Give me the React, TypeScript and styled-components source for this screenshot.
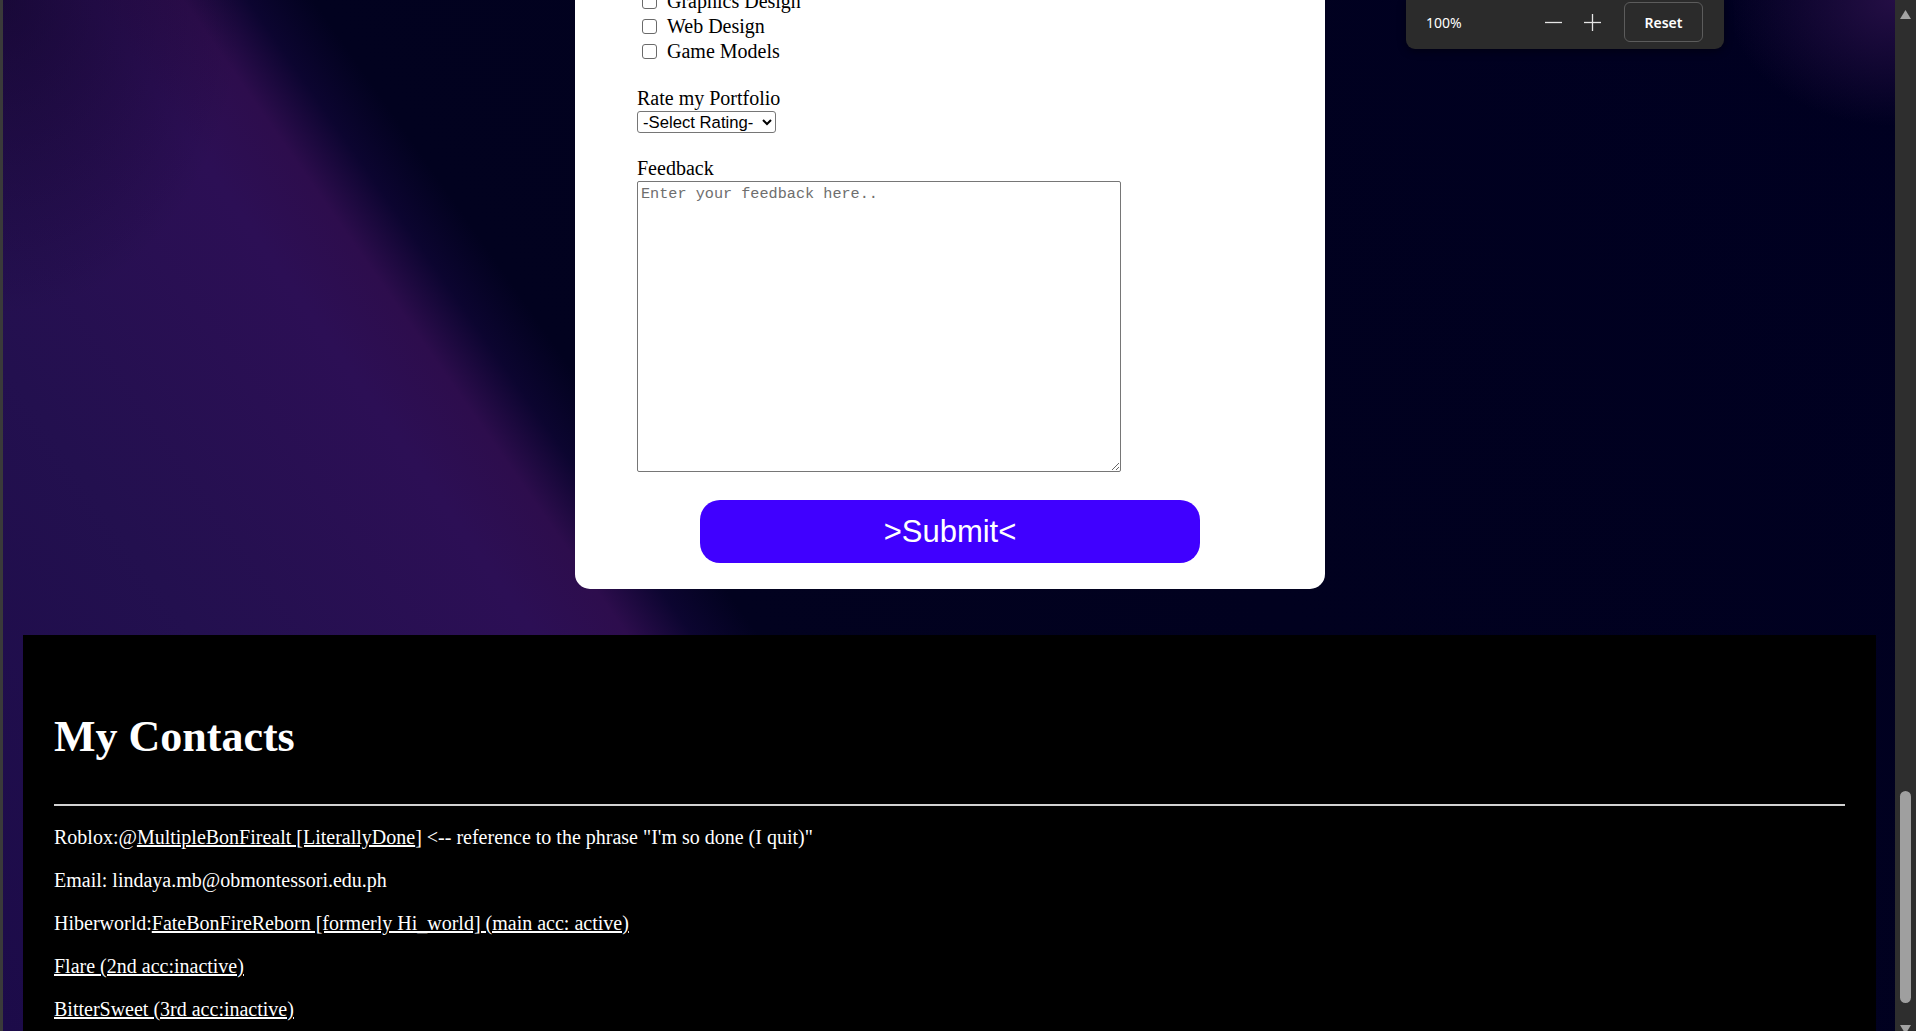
import React from "react";
import styled, { createGlobalStyle } from "styled-components";

const Global = createGlobalStyle`
  html, body { margin: 0; padding: 0; height: 100%; overflow: hidden; background: #00001f; }
  body { font-family: "Liberation Serif", "Times New Roman", serif; font-size: 20px; color: #000; }
  #root { height: 100%; }
  *, *::before, *::after { box-sizing: border-box; }
`;

const Window = styled.div`
  position: relative;
  display: flex;
  height: 100vh;
  overflow: hidden;
`;

const LeftEdge = styled.div`
  flex: none;
  width: 3px;
  background: #3a3a3a;
`;

const Page = styled.main`
  flex: 1;
  min-width: 0;
  display: flex;
  flex-direction: column;
  overflow: hidden;
  background:
    radial-gradient(ellipse 240px 180px at 100% 0%, rgba(72, 28, 104, 0.5), rgba(72, 28, 104, 0) 70%),
    radial-gradient(ellipse 320px 420px at 0% 0%, rgba(8, 2, 30, 0.5), rgba(8, 2, 30, 0) 75%),
    linear-gradient(55deg, #1c0b49 0%, #23104f 18%, #2c0f55 31%, #2d0d4d 34.5%, #0c0530 37%, #02021f 39.5%, #01011f 60%, #000021 100%);
`;

const Card = styled.form`
  flex: none;
  width: 750px;
  margin: -40px 0 0 calc(50% - 374px);
  padding: 29px 62px 26px;
  background: #fff;
  border-radius: 15px;
  display: flex;
  flex-direction: column;
`;

const CheckList = styled.div`
  display: flex;
  flex-direction: column;
`;

const CheckRow = styled.label`
  display: flex;
  align-items: center;
  height: 25px;
  line-height: 25px;
`;

const CheckBox = styled.input.attrs({ type: "checkbox" })`
  appearance: none;
  flex: none;
  width: 15px;
  height: 15px;
  margin: -1px 10px 0 5px;
  border: 1px solid #6a6a6a;
  border-radius: 3px;
  background: #fff;
`;

const FieldLabel = styled.label<{ $gap: number }>`
  display: block;
  margin-top: ${(p) => p.$gap}px;
  line-height: 25px;
`;

const RatingSelect = styled.select`
  align-self: flex-start;
  width: 139px;
  height: 22px;
  padding: 0 0 0 1px;
  font-family: "Liberation Sans", Arial, sans-serif;
  font-size: 16.7px;
  color: #000;
  background: #fff;
  border: 1px solid #767676;
  border-radius: 3px;
`;

const FeedbackBox = styled.textarea`
  display: block;
  width: 484px;
  height: 291px;
  padding: 3px;
  border: 1px solid #767676;
  border-radius: 2px;
  font-family: "Liberation Mono", "Courier New", monospace;
  font-size: 15.2px;
  line-height: 18px;
  resize: both;
  &::placeholder { color: #6e6e6e; }
`;

const SubmitButton = styled.button`
  align-self: center;
  width: 500px;
  height: 63px;
  margin-top: 28px;
  border: none;
  border-radius: 20px;
  background: #4000ff;
  color: #fff;
  font-family: "Liberation Sans", Arial, sans-serif;
  font-size: 31px;
  cursor: pointer;
`;

const Footer = styled.footer`
  flex: none;
  margin: 46px 19px 0 20px;
  padding: 0 31px 40px;
  background: #000;
  color: #fff;
`;

const Heading = styled.h1`
  margin: 76px 0 0;
  font-size: 44px;
  line-height: 51px;
  font-weight: bold;
`;

const Rule = styled.hr`
  margin: 42px 0 0;
  height: 2px;
  border: none;
  background: #d2d2d2;
`;

const ContactLine = styled.p`
  margin: 20px 0;
  line-height: 23px;
`;

const ContactLink = styled.a`
  color: #fff;
  text-decoration: underline;
`;

const Scrollbar = styled.div`
  flex: none;
  width: 21px;
  display: flex;
  flex-direction: column;
  align-items: center;
  background: #2e2e2e;
`;

const ArrowCell = styled.div<{ $h: number }>`
  flex: none;
  height: ${(p) => p.$h}px;
  width: 100%;
  display: flex;
  justify-content: center;
`;

const Track = styled.div`
  flex: 1;
  width: 100%;
  display: flex;
  flex-direction: column;
  justify-content: flex-end;
  align-items: center;
  padding-bottom: 18px;
`;

const Thumb = styled.div`
  width: 11px;
  height: 212px;
  border-radius: 6px;
  background: #9f9f9f;
`;

const ZoomPopup = styled.div`
  position: absolute;
  top: 0;
  right: 192px;
  width: 318px;
  height: 49px;
  padding: 0 21px 5px 20px;
  display: flex;
  align-items: center;
  background: #2b2b2b;
  border-radius: 0 0 9px 9px;
  box-shadow: 0 2px 8px rgba(0, 0, 0, 0.45);
  font-family: "Noto Sans", "Open Sans", sans-serif;
  color: #fff;
`;

const ZoomLevel = styled.span`
  flex: 1;
  font-size: 14px;
`;

const ZoomIcon = styled.button<{ $gap: number }>`
  flex: none;
  width: 17px;
  height: 17px;
  margin-right: ${(p) => p.$gap}px;
  padding: 0;
  border: none;
  background: transparent;
  display: flex;
`;

const ResetButton = styled.button`
  flex: none;
  width: 79px;
  height: 40px;
  border: 1px solid #5c5c5c;
  border-radius: 6px;
  background: transparent;
  color: #fff;
  font-family: "Noto Sans", "Open Sans", sans-serif;
  font-size: 14px;
  font-weight: 600;
`;

export default function App() {
  return (
    <>
      <Global />
      <Window>
        <LeftEdge />
        <Page>
          <Card onSubmit={(e) => e.preventDefault()}>
            <CheckList>
              <CheckRow><CheckBox />Graphics Design</CheckRow>
              <CheckRow><CheckBox />Web Design</CheckRow>
              <CheckRow><CheckBox />Game Models</CheckRow>
            </CheckList>
            <FieldLabel $gap={22} htmlFor="rating">Rate my Portfolio</FieldLabel>
            <RatingSelect id="rating" defaultValue="">
              <option value="">-Select Rating-</option>
              <option value="5">5</option>
              <option value="4">4</option>
              <option value="3">3</option>
              <option value="2">2</option>
              <option value="1">1</option>
            </RatingSelect>
            <FieldLabel $gap={23} htmlFor="feedback">Feedback</FieldLabel>
            <FeedbackBox id="feedback" placeholder="Enter your feedback here.." />
            <SubmitButton type="submit">&gt;Submit&lt;</SubmitButton>
          </Card>
          <Footer>
            <Heading>My Contacts</Heading>
            <Rule />
            <ContactLine>
              Roblox:@<ContactLink href="#">MultipleBonFirealt [LiterallyDone</ContactLink>] &lt;-- reference to the phrase "I'm so done (I quit)"
            </ContactLine>
            <ContactLine>Email: lindaya.mb@obmontessori.edu.ph</ContactLine>
            <ContactLine>
              Hiberworld:<ContactLink href="#">FateBonFireReborn [formerly Hi_world] (main acc: active)</ContactLink>
            </ContactLine>
            <ContactLine>
              <ContactLink href="#">Flare (2nd acc:inactive)</ContactLink>
            </ContactLine>
            <ContactLine>
              <ContactLink href="#">BitterSweet (3rd acc:inactive)</ContactLink>
            </ContactLine>
          </Footer>
        </Page>
        <Scrollbar>
          <ArrowCell $h={21}>
            <svg width="13" height="21" viewBox="0 0 13 21">
              <path d="M1 19 L6.5 10 L12 19 Z" fill="#a3a3a3" />
            </svg>
          </ArrowCell>
          <Track>
            <Thumb />
          </Track>
          <ArrowCell $h={10}>
            <svg width="13" height="10" viewBox="0 0 13 10">
              <path d="M1 4 L12 4 L6.5 13 Z" fill="#a3a3a3" />
            </svg>
          </ArrowCell>
        </Scrollbar>
        <ZoomPopup>
          <ZoomLevel>100%</ZoomLevel>
          <ZoomIcon $gap={22} aria-label="Zoom out">
            <svg width="17" height="17" viewBox="0 0 17 17">
              <line x1="0" y1="8.5" x2="17" y2="8.5" stroke="#e6e6e6" strokeWidth="1.3" />
            </svg>
          </ZoomIcon>
          <ZoomIcon $gap={23} aria-label="Zoom in">
            <svg width="17" height="17" viewBox="0 0 17 17">
              <line x1="0" y1="8.5" x2="17" y2="8.5" stroke="#e6e6e6" strokeWidth="1.3" />
              <line x1="8.5" y1="0" x2="8.5" y2="17" stroke="#e6e6e6" strokeWidth="1.3" />
            </svg>
          </ZoomIcon>
          <ResetButton>Reset</ResetButton>
        </ZoomPopup>
      </Window>
    </>
  );
}
